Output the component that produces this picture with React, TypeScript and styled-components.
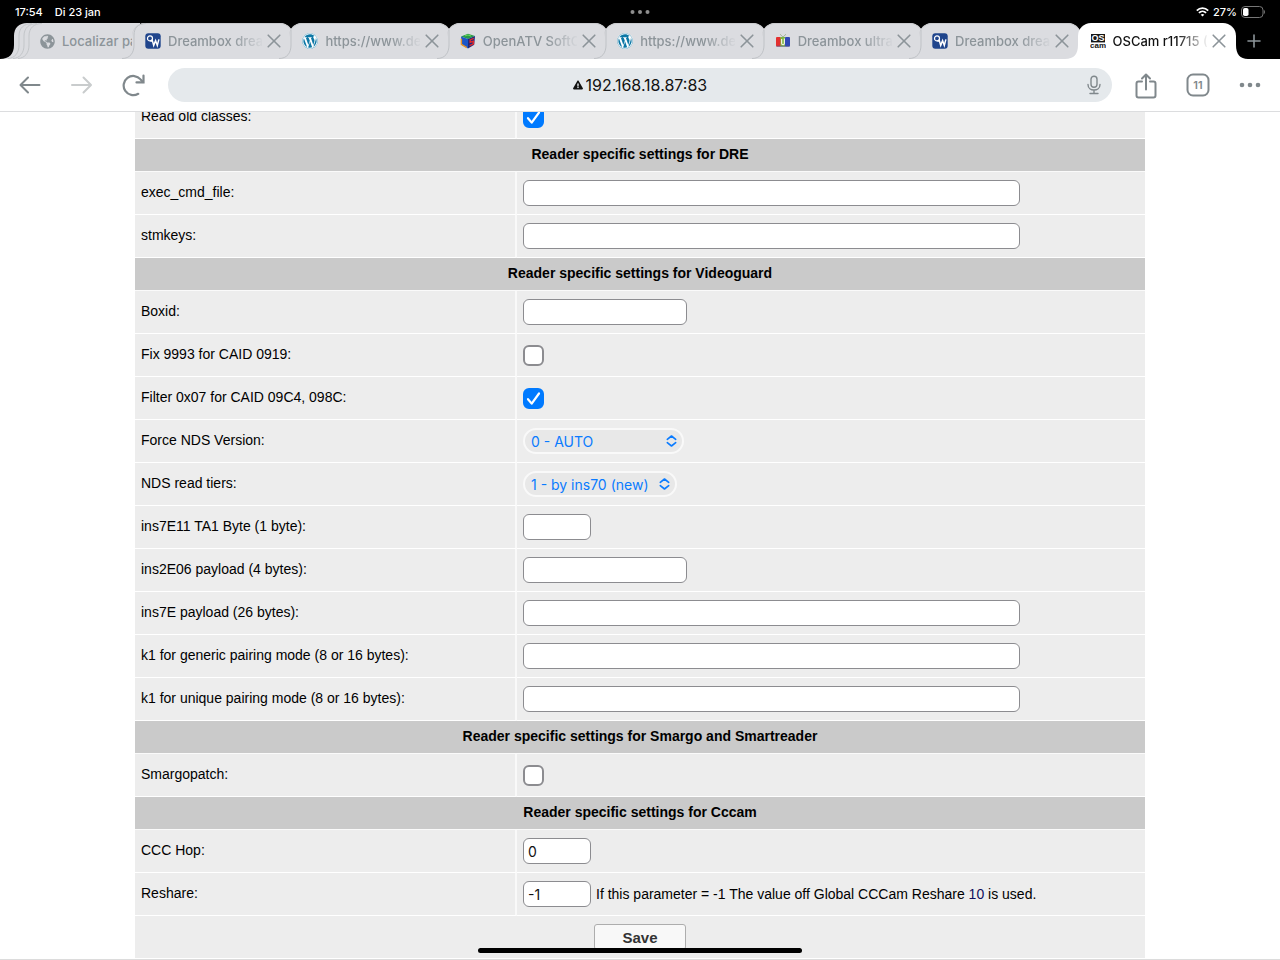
import React, { useId } from "react";
import styled, { createGlobalStyle, css } from "styled-components";
import { FaExclamationTriangle, FaGlobeAmericas, FaWordpress } from "react-icons/fa";

const ui = `Inter, "Liberation Sans", sans-serif`;
const page = `"Liberation Sans", Arial, sans-serif`;
const icon = "#80888c";

const GlobalStyle = createGlobalStyle`
  *, *::before, *::after { box-sizing: border-box; }
  body { margin: 0; background: #fff; }
  button, input, select { font: inherit; margin: 0; }
`;

const Screen = styled.div`
  display: flex;
  flex-direction: column;
  height: 100vh;
  overflow: hidden;
  font-family: ${ui};
`;

/* ---------- status bar ---------- */

const StatusBar = styled.header`
  display: grid;
  grid-template-columns: 1fr auto 1fr;
  align-items: center;
  flex: none;
  height: 23px;
  padding: 0 15px;
  background: #000;
  color: #fff;
  font-size: 11px;
  font-weight: 500;
`;

const StatusGroup = styled.div<{ $end?: boolean }>`
  display: flex;
  align-items: center;
  justify-content: ${(p) => (p.$end ? "flex-end" : "flex-start")};
  gap: ${(p) => (p.$end ? "4px" : "12px")};
`;

/* ---------- tab strip ---------- */

const TabStrip = styled.nav`
  display: flex;
  flex: none;
  height: 36px;
  background: #000;
`;

const StackedTab = styled.button`
  position: relative;
  display: flex;
  align-items: center;
  gap: 7px;
  flex: none;
  width: 134px;
  height: 36px;
  padding: 0 0 0 39px;
  border: 0;
  background: none;
  color: #8c9499;
  font-size: 13px;
  font-weight: 500;
  text-align: left;
`;

const StackShape = styled.svg`
  position: absolute;
  left: 0;
  top: 0;
`;

const TabBox = styled.div<{ $active?: boolean }>`
  position: relative;
  display: flex;
  align-items: center;
  flex: 1 1 0;
  min-width: 0;
  padding: 0 9px 0 11px;
  color: ${(p) => (p.$active ? "#111" : "#8c9499")};

  &::before {
    content: "";
    position: absolute;
    inset: ${(p) => (p.$active ? "0 0 0 -1px" : "0 -2px")};
    border-radius: 13px 13px 0 0;
    background: ${(p) => (p.$active ? "#fff" : "#dbdce0")};
    box-shadow: ${(p) => (p.$active ? "none" : "inset 0 1px 0 #c9cacd")};
  }
`;

const TabLink = styled.a`
  position: relative;
  display: flex;
  align-items: center;
  gap: 7px;
  flex: 1;
  min-width: 0;
  color: inherit;
  font-size: 13px;
  font-weight: 500;
  text-decoration: none;
`;

const TabTitle = styled.span`
  flex: 1;
  min-width: 0;
  overflow: hidden;
  white-space: nowrap;
  mask-image: linear-gradient(to right, #000 68%, transparent 102%);
`;

const StackTitle = styled.span`
  position: relative;
  white-space: nowrap;
`;

const TabClose = styled.button`
  position: relative;
  display: flex;
  align-items: center;
  justify-content: center;
  flex: none;
  width: 16px;
  height: 36px;
  margin-left: 4px;
  padding: 0;
  border: 0;
  background: none;
`;

const LeftEdge = styled.svg`
  position: absolute;
  left: -14px;
  top: 0;
`;

const Flare = styled.svg`
  position: absolute;
  right: -12px;
  bottom: 0;
`;

const Favicon = styled.span`
  position: relative;
  display: flex;
  align-items: center;
  justify-content: center;
  flex: none;
  width: 16px;
  height: 16px;
`;

const WordpressDisc = styled(Favicon)`
  border-radius: 50%;
  background: #fff;
  color: #0e78a6;
`;

const NewTab = styled.button`
  display: flex;
  align-items: center;
  justify-content: center;
  flex: none;
  width: 44px;
  padding: 0 8px 0 0;
  border: 0;
  background: none;
`;

/* ---------- toolbar ---------- */

const Toolbar = styled.div`
  display: flex;
  align-items: center;
  flex: none;
  height: 53px;
  padding: 0 4px;
  border-bottom: 1px solid #dcdddf;
  background: #fff;
`;

const ToolButton = styled.button`
  display: flex;
  align-items: center;
  justify-content: center;
  flex: none;
  width: 52px;
  height: 34px;
  padding: 0;
  border: 0;
  background: none;
`;

const AddressBar = styled.div`
  display: grid;
  grid-template-columns: 1fr auto 1fr;
  align-items: center;
  flex: 1;
  height: 34px;
  margin: 0 8px;
  border-radius: 17px;
  background: #e5e9ec;
`;

const Address = styled.label`
  display: flex;
  align-items: center;
  gap: 3px;
  grid-column: 2;
`;

const AddressInput = styled.input`
  width: 122px;
  padding: 0;
  border: 0;
  outline: 0;
  background: none;
  color: #111;
  font-size: 16px;
  line-height: 20px;
`;

const MicButton = styled.button`
  display: flex;
  justify-self: end;
  padding: 0 10px 0 0;
  border: 0;
  background: none;
`;

/* ---------- page ---------- */

const Content = styled.main`
  flex: 1;
  min-height: 0;
  overflow: hidden;
  border-bottom: 1px solid #dcdcdc;
  font-family: ${page};
  font-size: 14px;
  color: #000;
`;

const SettingsTable = styled.table`
  width: 1010px;
  max-width: 100%;
  margin: -16px auto 0;
  border-collapse: separate;
  border-spacing: 0;
  table-layout: fixed;
`;

const LabelCol = styled.col`
  width: 382px;
`;

const SectionCell = styled.th`
  height: 33px;
  padding: 0 6px 2px;
  border-bottom: 1px solid #fafafa;
  background: #cacaca;
  font-weight: 700;
  text-align: center;
`;

const cell = css`
  height: 43px;
  border-bottom: 1px solid #fff;
  background: #ededed;
  font-weight: 400;
  text-align: left;
`;

const LabelCell = styled.th`
  ${cell}
  padding: 0 6px 2px;
  border-right: 2px solid #f9f9f9;
`;

const ValueCell = styled.td`
  ${cell}
  padding: 0 6px;
`;

const ActionCell = styled.td`
  ${cell}
  text-align: center;
`;

const FieldLine = styled.div`
  display: flex;
  align-items: center;
  gap: 5px;
`;

const fieldWidths = { short: "68px", medium: "164px", long: "497px" };

const TextField = styled.input<{ $size: keyof typeof fieldWidths }>`
  width: ${(p) => fieldWidths[p.$size]};
  max-width: 100%;
  height: 26px;
  padding: 0 4px;
  border: 1px solid #8c8c90;
  border-radius: 6px;
  background: #fff;
  color: #111;
  font-family: ${ui};
  font-size: 14px;
`;

const CheckWrap = styled.span`
  position: relative;
  display: block;
  width: 21px;
  height: 21px;

  svg {
    position: absolute;
    inset: 0;
    pointer-events: none;
    visibility: hidden;
  }
  input:checked + svg {
    visibility: visible;
  }
`;

const Check = styled.input`
  display: block;
  appearance: none;
  width: 21px;
  height: 21px;
  border: 2px solid #8c8c90;
  border-radius: 6px;
  background: #fff;

  &:checked {
    border-color: #007aff;
    background: #007aff;
  }
`;

const SelectWrap = styled.span<{ $wide?: boolean }>`
  position: relative;
  display: block;
  width: ${(p) => (p.$wide ? "161px" : "154px")};

  svg {
    position: absolute;
    right: 7px;
    top: 7px;
    pointer-events: none;
  }
`;

const Select = styled.select`
  appearance: none;
  display: block;
  width: 100%;
  height: 26px;
  padding: 0 20px 0 6px;
  border: 2px solid #f9f9f9;
  border-radius: 13px;
  background: #e8e8e8;
  color: #0a7bff;
  font-family: ${ui};
  font-size: 14px;
`;

const ReshareLink = styled.a`
  color: #10105e;
  text-decoration: none;
`;

const SaveButton = styled.button`
  width: 92px;
  height: 26px;
  padding: 0;
  border: 1px solid #adadad;
  border-radius: 3px;
  background: #f8f8f8;
  color: #333;
  font-size: 15px;
  font-weight: 700;
`;

const HomeIndicator = styled.div`
  position: fixed;
  left: 50%;
  bottom: 7px;
  width: 324px;
  height: 5px;
  border-radius: 3px;
  background: #000;
  transform: translateX(-50%);
`;

/* ---------- favicons ---------- */

const DreamboxIcon = () => (
  <Favicon>
    <svg width="16" height="16" viewBox="0 0 16 16">
      <rect x="0.3" y="0.3" width="15.4" height="15.4" rx="3" fill="#20458c" />
      <circle cx="5" cy="5.4" r="2.5" fill="none" stroke="#fff" strokeWidth="1.2" />
      <path d="M5.6 7.2l1 1.4M7 6.4l1.7 6 1.9-4.8 1.700 4.8 1.600-6" fill="none" stroke="#fff" strokeWidth="1.500" />
    </svg>
  </Favicon>
);

const WordpressIcon = () => (
  <WordpressDisc>
    <FaWordpress size={16} />
  </WordpressDisc>
);

const CubeIcon = () => (
  <Favicon>
    <svg width="16" height="16" viewBox="0 0 16 16">
      <path d="M1 3.500L8 .8l7 2.300-7 2.900z" fill="#2a9a4c" />
      <path d="M1 3.500L8 6v9.500l-6.200-3.600z" fill="#1c56c8" />
      <path d="M15 3.100L8 6v9.500l6.200-3.800z" fill="#1b2a80" />
      <path d="M1.400 5.800v5.600l5.400 3.200" fill="none" stroke="#e8952a" strokeWidth="1.400" />
      <path d="M13.800 5.400l-3.600 1.500v2.300l3.200-.9v2.500l-3.800 1.900" fill="none" stroke="#e02a2a" strokeWidth="1.500" />
      <path d="M5 2.800l3-.8 3 1" fill="none" stroke="#6fdc55" strokeWidth="1" />
    </svg>
  </Favicon>
);

const TvIcon = () => (
  <Favicon>
    <svg width="16" height="16" viewBox="0 0 16 16">
      <path d="M5 1.200L8 4l3-2.800" fill="none" stroke="#a5b59a" strokeWidth="1" />
      <rect x="1" y="4" width="5" height="9.500" rx="1" fill="#e3302f" />
      <rect x="5.400" y="4" width="5" height="9.500" fill="#7cb842" />
      <rect x="10" y="4" width="5" height="9.500" rx="1" fill="#3147b5" />
      <path d="M6.600 6v4.200c0 2 2.800 2 2.800 0V5.400" fill="none" stroke="#f1efe0" strokeWidth="1.200" />
      <rect x="1.400" y="12.600" width="13.200" height="1.400" fill="#56528a" opacity="0.5" />
    </svg>
  </Favicon>
);

const OscamIcon = () => (
  <Favicon>
    <svg width="16" height="16" viewBox="0 0 16 16" fontFamily="Liberation Sans" fontWeight="700" textAnchor="middle" aria-hidden="true">
      <rect x="1" y="1" width="14" height="8.400" fill="#161616" />
      <text x="8" y="8.300" fontSize="9" fill="#fff">OS</text>
      <text x="8" y="14.600" fontSize="8" fill="#161616">cam</text>
    </svg>
  </Favicon>
);

/* ---------- browser parts ---------- */

type TabProps = { title: string; mark: React.ReactNode; active?: boolean; first?: boolean };

const Tab = ({ title, mark, active, first }: TabProps) => (
  <TabBox $active={active}>
    <LeftEdge width="26" height="36" viewBox="0 0 26 36" aria-hidden="true">
      {active ? (
        <path d="M13.500 20v16H0C9 36 13 31 13 22z" fill="#fff" />
      ) : (
        <path
          d={first ? "M26 .5C18 .5 14 5 14 12v10c0 8-4 13.500-12 13.500" : "M14 7v15c0 8-4 13.500-12 13.500"}
          fill="none"
          stroke="#bfc2c6"
        />
      )}
    </LeftEdge>
    <TabLink href="#" aria-current={active ? "page" : undefined}>
      {mark}
      <TabTitle>{title}</TabTitle>
    </TabLink>
    <TabClose type="button" aria-label={`Close ${title}`}>
      <svg width="16" height="16" viewBox="0 0 16 16" stroke="#8c9499" strokeWidth="1.600" strokeLinecap="round">
        <path d="M2.200 2.200l11.600 11.600M13.800 2.200L2.200 13.800" />
      </svg>
    </TabClose>
    {active && (
      <Flare width="12" height="14" viewBox="0 0 12 14" aria-hidden="true">
        <path d="M0 0c0 9 4 14 12 14H0z" fill="#fff" />
      </Flare>
    )}
  </TabBox>
);

/* ---------- form parts ---------- */

const Row = ({ label, children }: { label: string; children: (id: string) => React.ReactNode }) => {
  const id = useId();
  return (
    <tr>
      <LabelCell scope="row">
        <label htmlFor={id}>{label}</label>
      </LabelCell>
      <ValueCell>{children(id)}</ValueCell>
    </tr>
  );
};

const Section = ({ title }: { title: string }) => (
  <tr>
    <SectionCell colSpan={2}>{title}</SectionCell>
  </tr>
);

const TextRow = ({ label, size, value = "", note }: {
  label: string;
  size: keyof typeof fieldWidths;
  value?: string;
  note?: React.ReactNode;
}) => (
  <Row label={label}>
    {(id) => (
      <FieldLine>
        <TextField id={id} type="text" $size={size} defaultValue={value} />
        {note && <span>{note}</span>}
      </FieldLine>
    )}
  </Row>
);

const CheckRow = ({ label, checked }: { label: string; checked?: boolean }) => (
  <Row label={label}>
    {(id) => (
      <CheckWrap>
        <Check id={id} type="checkbox" defaultChecked={checked} />
        <svg width="21" height="21" viewBox="0 0 21 21" aria-hidden="true">
          <path d="M5 11.200l3.700 4.400L16 5.500" fill="none" stroke="#fff" strokeWidth="2.200" strokeLinecap="round" strokeLinejoin="round" />
        </svg>
      </CheckWrap>
    )}
  </Row>
);

const SelectRow = ({ label, value, wide }: { label: string; value: string; wide?: boolean }) => (
  <Row label={label}>
    {(id) => (
      <SelectWrap $wide={wide}>
        <Select id={id} defaultValue={value}>
          <option>{value}</option>
        </Select>
        <svg width="11" height="12" viewBox="0 0 11 12" fill="none" stroke="#0a7bff" strokeWidth="1.600" strokeLinecap="round" strokeLinejoin="round" aria-hidden="true">
          <path d="M1.300 4.300L5.500 1l4.200 3.300M1.300 7.700L5.500 11l4.200-3.300" />
        </svg>
      </SelectWrap>
    )}
  </Row>
);

export default function App() {
  return (
    <Screen>
      <GlobalStyle />
      <StatusBar>
        <StatusGroup>
          <span>17:54</span>
          <span>Di 23 jan</span>
        </StatusGroup>
        <svg width="20" height="4" viewBox="0 0 20 4" fill="#8e8e8e" aria-hidden="true">
          <circle cx="2.500" cy="2" r="2" />
          <circle cx="10" cy="2" r="2" />
          <circle cx="17.500" cy="2" r="2" />
        </svg>
        <StatusGroup $end>
          <svg width="13" height="10" viewBox="0 0 13 10" fill="none" stroke="#fff" strokeWidth="1.700" aria-hidden="true">
            <path d="M.8 3.700C4 .3 9 .3 12.200 3.700M2.900 5.900c2-2 5.200-2 7.200 0" />
            <path d="M6.500 9.600L4.700 7.700c1-.9 2.600-.9 3.600 0z" fill="#fff" stroke="none" />
          </svg>
          <span>27%</span>
          <svg width="24" height="12" viewBox="0 0 24 12" aria-hidden="true">
            <rect x=".5" y=".5" width="21.500" height="11" rx="3.500" fill="none" stroke="#777" />
            <rect x="2" y="2" width="5.500" height="8" rx="1.800" fill="#fff" />
            <path d="M22.900 4v4c1.400-.7 1.400-3.300 0-4z" fill="#777" />
          </svg>
        </StatusGroup>
      </StatusBar>

      <TabStrip aria-label="Tabs">
        <StackedTab type="button">
          <StackShape width="140" height="36" viewBox="0 0 140 36" aria-hidden="true">
            <path d="M0 36c9 0 14-5 14-14V13C14 5 19 0 27 0h113v36z" fill="#dbdce0" />
            <path
              d="M32 .5C24 .5 19 5 19 13v9c0 8-4 13-11 13.500M37 .5C29 .5 24 5 24 13v9c0 8-4 13-11 13.500M42 .5C34 .5 29 5 29 13v9c0 8-4 13-11 13.500"
              fill="none"
              stroke="#c3c6c9"
            />
          </StackShape>
          <Favicon>
            <FaGlobeAmericas size={15} />
          </Favicon>
          <StackTitle>Localizar pa</StackTitle>
        </StackedTab>
        <Tab first title="Dreambox drea" mark={<DreamboxIcon />} />
        <Tab title="https://www.de" mark={<WordpressIcon />} />
        <Tab title="OpenATV SoftC" mark={<CubeIcon />} />
        <Tab title="https://www.de" mark={<WordpressIcon />} />
        <Tab title="Dreambox ultra" mark={<TvIcon />} />
        <Tab title="Dreambox drea" mark={<DreamboxIcon />} />
        <Tab active title="OSCam r11715 (" mark={<OscamIcon />} />
        <NewTab type="button" aria-label="New tab">
          <svg width="14" height="14" viewBox="0 0 14 14" stroke="#8c9499" strokeWidth="1.600" strokeLinecap="round">
            <path d="M7 1v12M1 7h12" />
          </svg>
        </NewTab>
      </TabStrip>

      <Toolbar>
        <ToolButton type="button" aria-label="Back">
          <svg width="22" height="18" viewBox="0 0 22 18" fill="none" stroke={icon} strokeWidth="2" strokeLinecap="round" strokeLinejoin="round">
            <path d="M20.500 9H2M9 1.500L1.500 9 9 16.500" />
          </svg>
        </ToolButton>
        <ToolButton type="button" aria-label="Forward" disabled>
          <svg width="22" height="18" viewBox="0 0 22 18" fill="none" stroke="#c9cccd" strokeWidth="2" strokeLinecap="round" strokeLinejoin="round">
            <path d="M1 9h18.500M12.500 1.500L20 9l-7.500 7.500" />
          </svg>
        </ToolButton>
        <ToolButton type="button" aria-label="Reload">
          <svg width="24" height="24" viewBox="0 0 24 24" fill="none" stroke={icon} strokeWidth="2.200" strokeLinecap="round">
            <path d="M16.200 20.800A9.600 9.600 0 1 1 18.600 6.400L21 9" />
            <path d="M21.500 2.500V9.400h-7" strokeLinejoin="miter" />
          </svg>
        </ToolButton>
        <AddressBar>
          <Address>
            <FaExclamationTriangle size={10} color="#111" aria-hidden="true" />
            <AddressInput type="text" aria-label="Address" defaultValue="192.168.18.87:83" />
          </Address>
          <MicButton type="button" aria-label="Voice search">
            <svg width="16" height="20" viewBox="0 0 16 20" fill="none" stroke={icon} strokeWidth="1.400" strokeLinecap="round">
              <rect x="5" y="1.200" width="6" height="11" rx="3" />
              <path d="M2 9.500c0 7.400 12 7.400 12 0M8 15.200v3.300M4 18.500h8" />
            </svg>
          </MicButton>
        </AddressBar>
        <ToolButton type="button" aria-label="Share">
          <svg width="22" height="28" viewBox="0 -2 22 28" fill="none" stroke={icon} strokeWidth="2" strokeLinecap="round" strokeLinejoin="round">
            <path d="M7 8.500H3.500a2 2 0 0 0-2 2v12a2 2 0 0 0 2 2h15a2 2 0 0 0 2-2v-12a2 2 0 0 0-2-2H15M11 16.500V1.800M7 5.500l4-4 4 4" />
          </svg>
        </ToolButton>
        <ToolButton type="button" aria-label="11 open tabs">
          <svg width="24" height="24" viewBox="0 0 24 24">
            <rect x="1.500" y="1.500" width="21" height="21" rx="5.500" fill="none" stroke={icon} strokeWidth="2" />
            <text x="12" y="16" textAnchor="middle" fontSize="11" fontWeight="600" fill={icon}>11</text>
          </svg>
        </ToolButton>
        <ToolButton type="button" aria-label="More">
          <svg width="22" height="6" viewBox="0 0 22 6" fill={icon}>
            <circle cx="3" cy="3" r="2.300" />
            <circle cx="11" cy="3" r="2.300" />
            <circle cx="19" cy="3" r="2.300" />
          </svg>
        </ToolButton>
      </Toolbar>

      <Content>
        <SettingsTable>
          <colgroup>
            <LabelCol />
            <col />
          </colgroup>
          <tbody>
            <CheckRow label="Read old classes:" checked />
            <Section title="Reader specific settings for DRE" />
            <TextRow label="exec_cmd_file:" size="long" />
            <TextRow label="stmkeys:" size="long" />
            <Section title="Reader specific settings for Videoguard" />
            <TextRow label="Boxid:" size="medium" />
            <CheckRow label="Fix 9993 for CAID 0919:" />
            <CheckRow label="Filter 0x07 for CAID 09C4, 098C:" checked />
            <SelectRow label="Force NDS Version:" value="0 - AUTO" wide />
            <SelectRow label="NDS read tiers:" value="1 - by ins70 (new)" />
            <TextRow label="ins7E11 TA1 Byte (1 byte):" size="short" />
            <TextRow label="ins2E06 payload (4 bytes):" size="medium" />
            <TextRow label="ins7E payload (26 bytes):" size="long" />
            <TextRow label="k1 for generic pairing mode (8 or 16 bytes):" size="long" />
            <TextRow label="k1 for unique pairing mode (8 or 16 bytes):" size="long" />
            <Section title="Reader specific settings for Smargo and Smartreader" />
            <CheckRow label="Smargopatch:" />
            <Section title="Reader specific settings for Cccam" />
            <TextRow label="CCC Hop:" size="short" value="0" />
            <TextRow
              label="Reshare:"
              size="short"
              value="-1"
              note={
                <>
                  If this parameter = -1 The value off Global CCCam Reshare <ReshareLink href="#">10</ReshareLink> is used.
                </>
              }
            />
            <tr>
              <ActionCell colSpan={2}>
                <SaveButton type="submit">Save</SaveButton>
              </ActionCell>
            </tr>
          </tbody>
        </SettingsTable>
      </Content>
      <HomeIndicator />
    </Screen>
  );
}
